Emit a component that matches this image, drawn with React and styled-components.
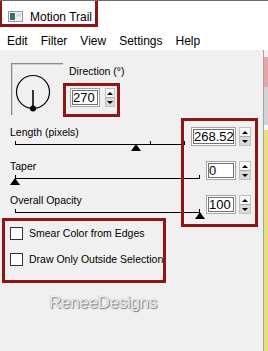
import React from "react";
import styled, { createGlobalStyle } from "styled-components";

const RED = "#8f1616";
const FONT = `"Liberation Sans", Arial, sans-serif`;

const GlobalStyle = createGlobalStyle`
  html, body { margin: 0; padding: 0; overflow: hidden; background: #f0f0f0; }
  body { font-family: ${FONT}; color: #000; }
`;

const Screen = styled.div`
  width: 268px;
  height: 351px;
  display: flex;
  flex-direction: column;
  overflow: hidden;
  background: #f0f0f0;
`;

const TitleBar = styled.div`
  flex: none;
  height: 27px;
  box-sizing: border-box;
  background: #fff;
  border-top: 1px solid #6d6d6d;
  display: flex;
`;

const TitleTag = styled.div`
  width: 98px;
  box-sizing: border-box;
  border: 0 solid ${RED};
  border-width: 0 3px 3px 2px;
  display: flex;
  align-items: flex-start;
  gap: 7px;
  padding: 9px 0 0 6px;
  font-size: 12px;
  line-height: 14px;
  white-space: nowrap;
`;

const TitleIcon = styled.svg`
  flex: none;
  margin-top: 1px;
`;

const MenuBar = styled.div`
  flex: none;
  height: 23px;
  box-sizing: border-box;
  background: #fff;
  display: flex;
  gap: 13px;
  padding: 7px 0 0 7px;
  font-size: 12px;
  line-height: 14px;
`;

const MenuItem = styled.span``;

const Body = styled.div`
  flex: 1;
  display: flex;
  min-height: 0;
`;

const Dialog = styled.div`
  flex: none;
  width: 263px;
  display: flex;
  flex-direction: column;
  background: #f0f0f0;
  font-size: 10.5px;
  line-height: 13px;
`;

const Edge = styled.div`
  flex: 1;
  border-left: 1px solid #a3a3a3;
  display: flex;
  flex-direction: column;
`;

const EdgePart = styled.div`
  flex: ${(p) => (p.$h ? `0 0 ${p.$h}px` : "1")};
  background: ${(p) => p.$c};
`;

const TopRow = styled.div`
  display: flex;
  align-items: flex-start;
  padding-top: 13px;
`;

const Dial = styled.div`
  flex: none;
  margin-left: 11px;
  width: 52px;
  height: 52px;
  box-sizing: border-box;
  border-top: 1px solid #8a8a8a;
  border-left: 1px solid #8a8a8a;
  box-shadow: inset 1px 1px 0 #d0d0d0;
`;

const DirControls = styled.div`
  display: flex;
  flex-direction: column;
  align-items: flex-start;
`;

const DirLabel = styled.div`
  margin-top: 2px;
  padding-left: 6px;
  white-space: nowrap;
`;

const DirFrame = styled.div`
  margin-top: 5px;
  border: 3px solid ${RED};
  padding: 2px 2px 7px 4px;
  display: flex;
  gap: 5px;
`;

const NumberField = styled.div`
  flex: none;
  width: ${(p) => p.$w}px;
  height: 19px;
  box-sizing: border-box;
  border: 1px solid #a4a4a4;
  box-shadow: inset 0 0 0 1px #fff, inset 0 0 0 2px #707070;
  background: #fff;
  padding-left: 2px;
  font-size: 13px;
  line-height: 17px;
  white-space: nowrap;
  overflow: hidden;
`;

const Spinner = styled.div`
  flex: none;
  width: ${(p) => p.$w}px;
  height: 19px;
  box-sizing: border-box;
  border: 1px solid #c2c2c2;
  display: flex;
  flex-direction: column;
`;

const SpinHalf = styled.div`
  flex: 1;
  display: flex;
  align-items: center;
  justify-content: center;
  background: ${(p) => (p.$down ? "#d9d9d9" : "#f7f7f7")};
  border-top: ${(p) => (p.$down ? "1px solid #a8a8a8" : "none")};
`;

const Arrow = styled.span`
  width: 0;
  height: 0;
  border-left: 3px solid transparent;
  border-right: 3px solid transparent;
  ${(p) => (p.$down ? "border-top: 3px solid #000;" : "border-bottom: 3px solid #000;")}
`;

const SlidersSection = styled.div`
  position: relative;
  padding-top: 9px;
`;

const SliderRow = styled.div`
  display: flex;
  align-items: flex-start;
  height: ${(p) => (p.$last ? 24 : 34)}px;
`;

const SliderLeft = styled.div`
  flex: 1;
  min-width: 0;
  display: flex;
  flex-direction: column;
`;

const SliderLabel = styled.div`
  padding-left: 10px;
  white-space: nowrap;
`;

const Track = styled.div`
  position: relative;
  margin: 5px 6px 0 15px;
  height: 0;
  border-top: 1px solid #000;
  &::before,
  &::after {
    content: "";
    position: absolute;
    bottom: 0;
    width: 1px;
    height: 4px;
    background: #000;
  }
  &::before { left: 0; }
  &::after { right: 0; }
`;

const Tick = styled.span`
  position: absolute;
  bottom: 0;
  left: ${(p) => p.$at}%;
  width: 1px;
  height: 4px;
  background: #000;
`;

const Thumb = styled.span`
  position: absolute;
  top: -1px;
  width: 0;
  height: 0;
  transform: translateX(-50%);
  border-left: 5px solid transparent;
  border-right: 5px solid transparent;
  border-bottom: 7px solid #000;
`;

const ValueCell = styled.div`
  flex: none;
  display: flex;
  gap: 3px;
  margin: 1px 12px 0 0;
`;

const Highlight = styled.div`
  position: absolute;
  top: 1px;
  left: 181px;
  width: 77px;
  height: 109px;
  box-sizing: border-box;
  border: 3px solid ${RED};
  pointer-events: none;
`;

const CheckGroup = styled.div`
  margin-left: 2px;
  width: 164px;
  height: 65px;
  box-sizing: border-box;
  border: 3px solid ${RED};
  padding: 6px 0 0 5px;
  display: flex;
  flex-direction: column;
  gap: 13px;
`;

const CheckRow = styled.label`
  display: flex;
  align-items: center;
  gap: 6px;
  height: 13px;
  white-space: nowrap;
`;

const CheckBox = styled.span`
  flex: none;
  width: 13px;
  height: 13px;
  box-sizing: border-box;
  border: 1px solid #333;
  background: #fff;
`;

const Watermark = styled.div`
  margin-top: 10px;
  padding-left: 49px;
  font-size: 17px;
  line-height: 20px;
  letter-spacing: -0.3px;
  color: #ededed;
  text-shadow: 1px 1px 1px #7a7a7a, 0 0 1px #9a9a9a;
  white-space: nowrap;
`;

const sliders = [
  { label: "Length (pixels)", value: "268.52", pct: 71.2, w: 45, ticks: [79.4] },
  { label: "Taper", value: "0", pct: 0, w: 30, ticks: [] },
  { label: "Overall Opacity", value: "100", pct: 100, w: 30, ticks: [] },
];

function SpinButtons({ w }) {
  return (
    <Spinner $w={w}>
      <SpinHalf>
        <Arrow />
      </SpinHalf>
      <SpinHalf $down>
        <Arrow $down />
      </SpinHalf>
    </Spinner>
  );
}

export default function App() {
  return (
    <>
      <GlobalStyle />
      <Screen>
        <TitleBar>
          <TitleTag>
            <TitleIcon width="15" height="11" viewBox="0 0 15 11">
              <rect x="0.5" y="0.5" width="14" height="10" fill="#eef2f3" stroke="#8e9ca2" />
              <rect x="2" y="2" width="5" height="7" fill="#3f6f66" />
              <rect x="8.5" y="2.5" width="4.5" height="3" fill="#cfd8dc" />
            </TitleIcon>
            <span>Motion Trail</span>
          </TitleTag>
        </TitleBar>
        <MenuBar>
          <MenuItem>Edit</MenuItem>
          <MenuItem>Filter</MenuItem>
          <MenuItem>View</MenuItem>
          <MenuItem>Settings</MenuItem>
          <MenuItem>Help</MenuItem>
        </MenuBar>
        <Body>
          <Dialog>
            <TopRow>
              <Dial>
                <svg width="51" height="51" viewBox="0 0 51 51">
                  <circle cx="21" cy="28" r="16.5" fill="none" stroke="#000" strokeWidth="1.2" />
                  <line x1="21" y1="26" x2="21" y2="44" stroke="#333" strokeWidth="2" />
                  <circle cx="21" cy="44.5" r="3" fill="#000" />
                </svg>
              </Dial>
              <DirControls>
                <DirLabel>Direction (°)</DirLabel>
                <DirFrame>
                  <NumberField $w={30}>270</NumberField>
                  <SpinButtons w={10} />
                </DirFrame>
              </DirControls>
            </TopRow>
            <SlidersSection>
              {sliders.map((s, i) => (
                <SliderRow key={s.label} $last={i === sliders.length - 1}>
                  <SliderLeft>
                    <SliderLabel>{s.label}</SliderLabel>
                    <Track>
                      {s.ticks.map((t) => (
                        <Tick key={t} $at={t} />
                      ))}
                      <Thumb style={{ left: `${s.pct}%` }} />
                    </Track>
                  </SliderLeft>
                  <ValueCell>
                    <NumberField $w={s.w}>{s.value}</NumberField>
                    <SpinButtons w={12} />
                  </ValueCell>
                </SliderRow>
              ))}
              <Highlight />
            </SlidersSection>
            <CheckGroup>
              <CheckRow>
                <CheckBox />
                Smear Color from Edges
              </CheckRow>
              <CheckRow>
                <CheckBox />
                Draw Only Outside Selection
              </CheckRow>
            </CheckGroup>
            <Watermark>ReneeDesigns</Watermark>
          </Dialog>
          <Edge>
            <EdgePart $h={7} $c="#f0f0f0" />
            <EdgePart $h={30} $c="#e6a6a6" />
            <EdgePart $h={38} $c="#d2d2d2" />
            <EdgePart $h={5} $c="#fafafa" />
            <EdgePart $c="#e8e07a" />
          </Edge>
        </Body>
      </Screen>
    </>
  );
}
